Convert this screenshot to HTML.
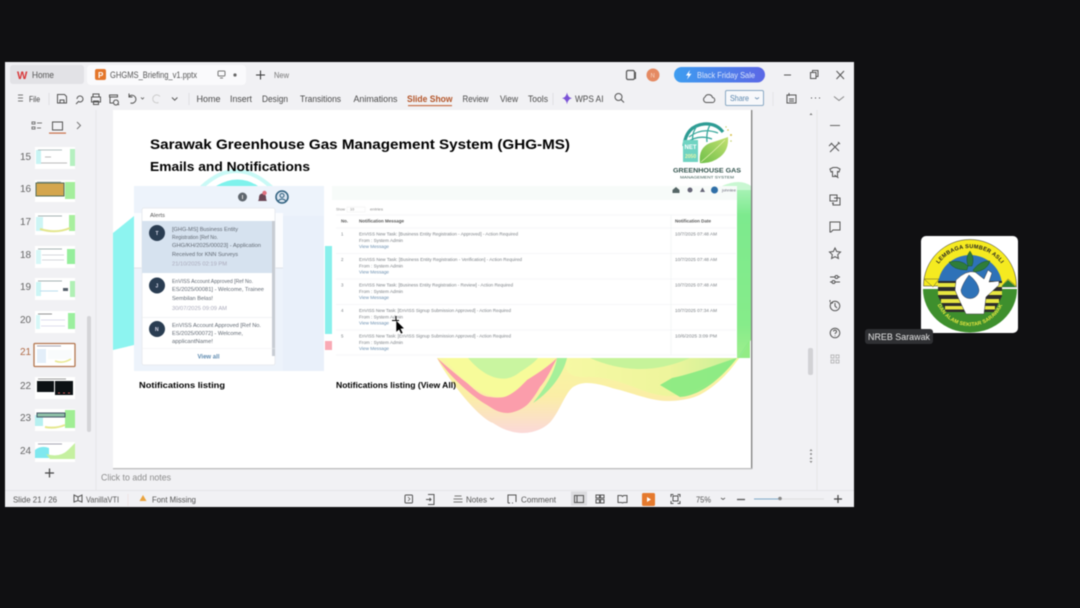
<!DOCTYPE html>
<html><head><meta charset="utf-8"><title>GHGMS Briefing</title>
<style>
html,body{margin:0;padding:0;background:#101012;width:1080px;height:608px;overflow:hidden}
svg{display:block;position:absolute;left:0;top:0;filter:blur(.42px)}
text{font-family:"Liberation Sans",sans-serif;fill:#555}
.r{font-size:9px;fill:#4a4a4a}
.s{font-size:8.5px;fill:#555}
.n{font-size:10px;fill:#666}
.b{font-weight:bold;fill:#000}
.a{font-size:5.4px;fill:#626a74}
.d{font-size:5.2px;fill:#aab}
.m{font-size:4.4px;fill:#7a7f84}
.l{font-size:4.4px;fill:#6b8fb0}
.i{fill:none;stroke:#555;stroke-width:1}
</style></head><body>
<svg width="1080" height="608" viewBox="0 0 1080 608" xmlns="http://www.w3.org/2000/svg">
<defs>
<linearGradient id="grnr" x1="0" y1="0" x2="1" y2="0"><stop offset="0" stop-color="#f6f9a4"/><stop offset=".6" stop-color="#eef59c"/><stop offset="1" stop-color="#c8f098"/></linearGradient>
<linearGradient id="edge" x1="0" y1="0" x2="0" y2="1"><stop offset="0" stop-color="#f6fb9e"/><stop offset=".6" stop-color="#fbeea6"/><stop offset="1" stop-color="#fbd9d9"/></linearGradient>
<linearGradient id="blu" x1="0" y1="0" x2="1" y2="0"><stop offset="0" stop-color="#3e9df0"/><stop offset="1" stop-color="#5b67e6"/></linearGradient>
<linearGradient id="lf" x1="0" y1="1" x2="1" y2="0"><stop offset="0" stop-color="#6fc04a"/><stop offset="1" stop-color="#c3e070"/></linearGradient>
<linearGradient id="gbar" x1="0" y1="0" x2="0" y2="1"><stop offset="0" stop-color="#a6f2b4"/><stop offset=".15" stop-color="#7dea8e"/><stop offset=".8" stop-color="#86ec8a"/><stop offset="1" stop-color="#9fef8e"/></linearGradient>
<path id="arcT" d="M931 287 A39 39 0 0 1 1009 287"/>
<path id="arcB" d="M935 292 A35 34 0 0 0 1005 292"/>
</defs>

<!-- window -->
<rect x="5" y="62" width="849" height="445" fill="#f1f1f4"/>
<!-- tabs -->
<rect x="10" y="65" width="74" height="19" rx="3" fill="#e2e2e6"/>
<rect x="87" y="65" width="159" height="20" rx="4" fill="#fafafc"/>
<text x="17" y="79" font-size="11" font-weight="bold" style="fill:#d9383a">W</text>
<text x="32" y="78" class="r" style="fill:#555" textLength="22" lengthAdjust="spacingAndGlyphs">Home</text>
<rect x="95" y="69" width="11" height="11" rx="2" fill="#e4762b"/>
<text x="98" y="78" font-size="8" font-weight="bold" style="fill:#fff">P</text>
<text x="110" y="78" class="r" style="fill:#555" textLength="87" lengthAdjust="spacingAndGlyphs">GHGMS_Briefing_v1.pptx</text>
<rect x="218" y="71" width="7" height="5" rx="1" class="i" style="stroke:#777"/><path d="M220 78h3" class="i" style="stroke:#777"/>
<circle cx="235" cy="75" r="1.6" fill="#666"/>
<path d="M256 75h9M260.500 70.500v9" class="i" style="stroke:#333"/>
<text x="274" y="78" font-size="8" style="fill:#777" textLength="15" lengthAdjust="spacingAndGlyphs">New</text>
<!-- top right -->
<rect x="626.500" y="70.500" width="8" height="9" rx="1.500" class="i" style="stroke-width:1.200"/><path d="M635.500 72v7" class="i"/>
<circle cx="653" cy="75" r="6.500" fill="#e58a62"/><text x="650.500" y="77.500" font-size="6" style="fill:#f9d5c4">N</text>
<rect x="674" y="67" width="91" height="15.500" rx="7.700" fill="url(#blu)"/>
<path d="M690 70l-4 5.500h2.500l-1.500 4 4.500-5.700h-2.700z" fill="#fff"/>
<text x="697" y="78" font-size="8.500" style="fill:#dce6fb" textLength="58" lengthAdjust="spacingAndGlyphs">Black Friday Sale</text>
<path d="M784 75h7" class="i"/>
<path d="M810.500 72.500h5.500v6h-5.500zM812.500 72.500v-2h5.500v6h-2" class="i"/>
<path d="M836.500 71l7.500 8M844 71l-7.500 8" class="i"/>
<!-- ribbon -->
<path d="M18 95h5M18 98h5M18 101h5" class="i" style="stroke:#777"/>
<text x="29" y="102" font-size="8.500" style="fill:#444" textLength="11" lengthAdjust="spacingAndGlyphs">File</text>
<path d="M49 93v12" stroke="#e0e0e3"/>
<path d="M57.500 94.500h7l2 2v6.500h-9zM60 103v-3h4v3" class="i"/>
<path d="M77 99a3 3 0 1 1 3 3h-1M76 104l3-3" class="i"/>
<path d="M93 97v-3h6v3M91.500 97h9v5h-9zM93.500 101h5v3.500h-5z" class="i"/>
<path d="M109.500 95h8v2h-8zM110 97v6h3M116 100a2.500 2.500 0 1 1-.1 0M117.500 103.500l1.500 1.500" class="i"/>
<path d="M129 96.500a4 4 0 1 1 1.500 6.500M129 93.500v3.500h3.500" class="i"/>
<path d="M141 97.500l1.500 1.500 1.500-1.500" class="i" style="stroke-width:.8"/>
<path d="M160 96.500a4 4 0 1 0-1.500 6" class="i" style="stroke:#ccc"/>
<path d="M172 97.500l2.700 2.700 2.700-2.700" class="i"/>
<path d="M189 93v12" stroke="#e0e0e3"/>
<text x="196.500" y="102" class="r" textLength="24" lengthAdjust="spacingAndGlyphs">Home</text>
<text x="230" y="102" class="r" textLength="22" lengthAdjust="spacingAndGlyphs">Insert</text>
<text x="262" y="102" class="r" textLength="26" lengthAdjust="spacingAndGlyphs">Design</text>
<text x="300" y="102" class="r" textLength="41" lengthAdjust="spacingAndGlyphs">Transitions</text>
<text x="353.500" y="102" class="r" textLength="44" lengthAdjust="spacingAndGlyphs">Animations</text>
<text x="407" y="102" class="r" font-weight="bold" style="fill:#b4562a" textLength="45.500" lengthAdjust="spacingAndGlyphs">Slide Show</text>
<rect x="408" y="105" width="44" height="1.200" fill="#c9714a"/>
<text x="462.500" y="102" class="r" textLength="26" lengthAdjust="spacingAndGlyphs">Review</text>
<text x="500" y="102" class="r" textLength="18" lengthAdjust="spacingAndGlyphs">View</text>
<text x="528" y="102" class="r" textLength="20" lengthAdjust="spacingAndGlyphs">Tools</text>
<path d="M553 93v12" stroke="#e0e0e3"/>
<path d="M567 92.500q.8 5 5 5.800q-4.200.8-5 6q-.8-5.200-5-6q4.200-.8 5-5.800z" fill="#7a52d6"/>
<text x="575" y="102" class="r" textLength="28.500" lengthAdjust="spacingAndGlyphs">WPS AI</text>
<circle cx="618.500" cy="97" r="3.500" class="i"/><path d="M621 99.500l3 3" class="i"/>
<path d="M706 102.500h6a2.500 2.500 0 0 0 .5-5a4 4 0 0 0-7.500-.5a3 3 0 0 0 1 5.500z" class="i"/>
<rect x="725.500" y="90.500" width="38" height="15" rx="1.500" fill="#f7f8fb" stroke="#8aa9c4"/>
<text x="730" y="101" font-size="8.500" style="fill:#5a86ad" textLength="19" lengthAdjust="spacingAndGlyphs">Share</text>
<path d="M755 97.500l2 1.500 2-1.500" class="i" style="stroke:#6b8eb0;stroke-width:.8"/>
<path d="M773 92v14" stroke="#e4e4e7"/>
<path d="M787 95h9v8h-9zM789 93v3M789 99h5M789 101h5" class="i"/>
<path d="M811 98h1M815 98h1M819 98h1" class="i" style="stroke:#444"/>
<path d="M834 96.500l5 4 5-4" class="i" style="stroke:#888"/>

<!-- left panel -->
<path d="M96 110V490" stroke="#e6e6e9"/>
<path d="M32 122h3v2h-3zM32 127h3v2h-3zM37 123h5M37 128h4" class="i" style="stroke:#777"/>
<rect x="52.500" y="122" width="10" height="8" class="i"/>
<rect x="49" y="132.500" width="17" height="1.200" fill="#c9714a"/>
<path d="M77 122l3.500 3.500-3.500 3.500" class="i" style="stroke:#777"/>
<text x="20" y="160" class="n">15</text><text x="20" y="192" class="n">16</text><text x="20" y="225" class="n">17</text><text x="20" y="258" class="n">18</text><text x="20" y="290" class="n">19</text><text x="20" y="323" class="n">20</text>
<text x="20" y="355" class="n" style="fill:#b06a45">21</text><text x="20" y="389" class="n">22</text><text x="20" y="421" class="n">23</text><text x="20" y="454" class="n">24</text>
<!-- thumbs -->
<g>
<rect x="35" y="147" width="40" height="22" fill="#fff"/><rect x="36" y="150" width="5" height="14" fill="#c8f4f4"/><rect x="70" y="149" width="5" height="17" fill="#b5f0c0"/><path d="M38 150h24" stroke="#9aa" stroke-width=".8"/><path d="M41 163h26M45 157h6" stroke="#bbb"/>
<rect x="35" y="180" width="40" height="22" fill="#fff"/><rect x="36" y="183" width="28" height="13" fill="#d4a64e" stroke="#556b55"/><rect x="65" y="182" width="10" height="17" fill="#a4ee9c"/><path d="M37 182h24" stroke="#899" stroke-width=".8"/>
<rect x="35" y="213" width="40" height="22" fill="#fff"/><rect x="36" y="217" width="7" height="14" fill="#cdf5f5"/><rect x="69" y="215" width="6" height="16" fill="#a8ef9e"/><path d="M40 229q16 5 30-1" stroke="#e3e68c" stroke-width="2" fill="none"/><path d="M38 216h24" stroke="#899" stroke-width=".8"/>
<rect x="35" y="246" width="40" height="22" fill="#fff"/><rect x="36" y="250" width="5" height="14" fill="#d7f7f7"/><rect x="67" y="249" width="8" height="15" fill="#95ee9c"/><path d="M38 249h24" stroke="#899" stroke-width=".8"/><path d="M42 255h22M42 260h22" stroke="#d5d8dc"/>
<rect x="35" y="278" width="40" height="22" fill="#fff"/><rect x="36" y="282" width="5" height="14" fill="#ccf5f5"/><rect x="70" y="281" width="5" height="16" fill="#b0f0b5"/><rect x="63" y="288" width="5" height="3" fill="#56606a"/><path d="M38 281h24" stroke="#899" stroke-width=".8"/><path d="M40 291h18" stroke="#bde"/>
<rect x="35" y="311" width="40" height="22" fill="#fff"/><rect x="36" y="315" width="4" height="14" fill="#d7f7f7"/><rect x="68" y="313" width="7" height="16" fill="#9bef9e"/><path d="M38 314h14" stroke="#777" stroke-width=".8"/><path d="M41 320h24M41 326h24" stroke="#dde"/>
<rect x="34" y="343.500" width="41" height="23" rx="1" fill="#fff" stroke="#b3764e" stroke-width="1.300"/><rect x="37" y="349" width="9" height="14" fill="#e3eef9"/><rect x="48" y="350" width="24" height="9" fill="#f9fbfc"/><path d="M37 346h24" stroke="#889" stroke-width=".8"/><path d="M55 361q8 3 16-2" stroke="#e8e88e" stroke-width="1.500" fill="none"/>
<rect x="35" y="377" width="40" height="22" fill="#fff"/><rect x="37" y="381" width="17" height="11" fill="#0c1114"/><rect x="55" y="381" width="18" height="14" fill="#0c1114"/><path d="M38 379h28" stroke="#777" stroke-width=".8"/><path d="M58 393h2M63 393h2M68 393h2" stroke="#c55"/>
<rect x="35" y="409" width="40" height="22" fill="#fff"/><rect x="35" y="415" width="8" height="11" fill="#b5f0f0"/><rect x="65" y="410" width="10" height="18" fill="#a0ee94"/><rect x="37" y="413" width="28" height="4" fill="#8fc0a8" stroke="#456"/><path d="M45 427q10 2 20-2" stroke="#e5e88e" stroke-width="2" fill="none"/>
<rect x="35" y="442" width="40" height="20" fill="#fff"/><path d="M35 450q6-5 14-2v10h-14z" fill="#7fe8ef"/><path d="M46 454q14 4 22-4l7-7v16h-25z" fill="#c5f0a0"/><path d="M38 444h24" stroke="#889" stroke-width=".8"/>
</g>
<rect x="87" y="316" width="4" height="116" rx="2" fill="#d4d4d7"/>
<path d="M45 473h9M49.500 468.500v9" stroke="#444" stroke-width="1.200"/>

<!-- slide -->
<rect x="750.500" y="110" width="1.800" height="359" fill="#7f7f7f"/>
<rect x="113" y="468" width="639" height="1.300" fill="#bdbdbd"/>
<rect x="113" y="110" width="638" height="358" fill="#fff"/>
<!-- decorations -->
<path d="M200 186Q236 152 273 186Z" fill="#c9f9f6"/>
<path d="M206 186Q236 160 267 186Z" fill="#ffffff"/>
<path d="M216 186Q238 173 258 186Z" fill="#7ff2ec"/>
<path d="M113 233L134 216V345L113 350Z" fill="#8df4f0"/>
<rect x="325" y="246" width="7" height="88" fill="#88f0ec"/>
<rect x="325" y="341" width="7" height="9" fill="#f9a9b4"/>
<path d="M722 186Q740 178 751 186V200H722Z" fill="#c9f7d2"/>
<path d="M737 190H751V340L737 358Z" fill="url(#gbar)"/>
<!-- wave -->
<path d="M437 358C447 378 478 418 493 423C505 431 515 433 523 433C535 433 547 427 552 420C560 410 566 392 573 387C578 384 582 383 587 383C600 383 610 388 620 390C640 396 655 401 667 401C682 401 695 398 703 393C715 386 725 376 730 370C738 360 746 350 750 340V358Z" fill="url(#edge)"/>
<path d="M567 358C562 372 572 378 587 377C620 376 640 394 667 396C690 396 720 380 737 358Z" fill="url(#grnr)"/>
<path d="M680 397C700 396 722 378 737 358L750 340V358L737 358C722 362 700 372 672 378L660 385Z" fill="#86ea82" opacity=".9"/>
<path d="M590 358Q640 380 690 358Z" fill="#c6f39a"/>
<path d="M557 358H567C563 375 550 392 533 403C545 388 555 372 557 358Z" fill="#a5f09a"/>
<path d="M444 358C460 378 480 397 500 397C520 397 545 378 552 358Z" fill="#f7fb9a"/>
<path d="M468 358C485 378 505 385 520 372C528 367 535 362 538 358Z" fill="#c9f5a0"/>
<path d="M437 358C445 365 458 376 467 383C475 390 482 397 490 397C497 398 503 398 507 396C516 392 522 385 527 380C540 372 550 365 557 358C550 372 546 380 540 387C535 396 530 402 527 405C521 410 513 413 507 413C498 413 492 408 487 405C480 401 475 397 470 393C458 383 447 372 437 358Z" fill="#fb9dab"/>
<!-- titles -->
<text x="150" y="149" class="b" font-size="14" textLength="420" lengthAdjust="spacingAndGlyphs">Sarawak Greenhouse Gas Management System (GHG-MS)</text>
<text x="150" y="171" class="b" font-size="13" textLength="160" lengthAdjust="spacingAndGlyphs">Emails and Notifications</text>
<!-- GHG logo -->
<g>
<path d="M684 146Q686 126 704 124Q716 123 723 132" fill="none" stroke="#2e9c94" stroke-width="3.200"/>
<path d="M689 137Q702 127 718 133M697 126Q690 135 694 146M710 125Q706 132 707 142M686 143Q698 134 712 139" fill="none" stroke="#38a89c" stroke-width="1.300"/>
<rect x="683" y="140" width="15" height="22" fill="#6fd3c2"/>
<text x="684.500" y="149" font-size="6" font-weight="bold" style="fill:#fff">NET</text>
<text x="685" y="158" font-size="5" font-weight="bold" style="fill:#e9f5a9">2050</text>
<path d="M700 163Q698 148 710 143Q720 140 728 137Q729 150 720 157Q711 164 700 163Z" fill="url(#lf)"/>
<path d="M701 162Q712 153 725 140" stroke="#e8f3b5" fill="none" stroke-width=".7"/>
<circle cx="728" cy="130" r=".8" fill="#d8c04a"/><circle cx="731" cy="135" r="1" fill="#d8c04a"/><circle cx="731" cy="141" r=".8" fill="#c3d06a"/><circle cx="726" cy="127" r=".7" fill="#c3d06a"/>
<text x="673" y="172.500" font-size="6.600" font-weight="bold" style="fill:#31524c" textLength="68" lengthAdjust="spacingAndGlyphs">GREENHOUSE GAS</text>
<text x="680" y="178.500" font-size="3.800" style="fill:#31524c" textLength="54" lengthAdjust="spacingAndGlyphs">MANAGEMENT SYSTEM</text>
</g>

<!-- Left card -->
<rect x="134" y="186" width="190" height="185" fill="#edf3fb"/>
<rect x="283" y="216" width="41" height="155" fill="#e9f0fa"/>
<rect x="134" y="213" width="149" height="55" fill="#fbfcfe"/>
<path d="M134 268h149" stroke="#dfe4ea"/>
<circle cx="242.500" cy="197" r="4.500" fill="#5f666e"/><rect x="242" y="195" width="1" height="4" fill="#ddd"/>
<path d="M258 201q1-1 1-4a3.500 3.500 0 0 1 7 0q0 3 1 4z" fill="#6b4755"/><circle cx="264.500" cy="193" r="2.200" fill="#e0707f"/>
<circle cx="282" cy="197" r="6" fill="#dbe5f0" stroke="#2f607f" stroke-width="1.500"/>
<circle cx="282" cy="195.500" r="2" fill="none" stroke="#2f607f"/><path d="M278 201q4-4 8 0" fill="none" stroke="#2f607f"/>
<rect x="142" y="208" width="133" height="157" rx="2" fill="#fff" stroke="#e8ebef"/>
<text x="150" y="217" font-size="5.600" style="fill:#555" textLength="15" lengthAdjust="spacingAndGlyphs">Alerts</text>
<rect x="142" y="221" width="130" height="52" fill="#d6e2ef"/>
<rect x="272" y="221" width="3" height="135" fill="#c7ccd3"/>
<path d="M142 317.500h130" stroke="#e6e8eb" stroke-width=".6"/>
<circle cx="157" cy="233" r="8" fill="#2a3d52"/><text x="155.500" y="235" font-size="5" font-weight="bold" style="fill:#dde">T</text>
<circle cx="157" cy="285.500" r="8" fill="#2a3d52"/><text x="155.500" y="287.500" font-size="5" font-weight="bold" style="fill:#dde">J</text>
<circle cx="157" cy="329" r="8" fill="#2a3d52"/><text x="155" y="331" font-size="5" font-weight="bold" style="fill:#dde">N</text>
<text x="172" y="231" class="a" textLength="66" lengthAdjust="spacingAndGlyphs">[GHG-MS] Business Entity</text>
<text x="172" y="239" class="a" textLength="46" lengthAdjust="spacingAndGlyphs">Registration [Ref No.</text>
<text x="172" y="247" class="a" textLength="89" lengthAdjust="spacingAndGlyphs">GHG/KH/2025/00023] - Application</text>
<text x="172" y="256" class="a" textLength="66" lengthAdjust="spacingAndGlyphs">Received for KNN Surveys</text>
<text x="172" y="265.500" class="d" textLength="55" lengthAdjust="spacingAndGlyphs">21/10/2025 02:19 PM</text>
<text x="172" y="283" class="a" textLength="81" lengthAdjust="spacingAndGlyphs">EnVISS Account Approved [Ref No.</text>
<text x="172" y="291" class="a" textLength="92" lengthAdjust="spacingAndGlyphs">ES/2025/00081] - Welcome, Trainee</text>
<text x="172" y="300" class="a" textLength="41" lengthAdjust="spacingAndGlyphs">Sembilan Belas!</text>
<text x="172" y="310" class="d" textLength="55" lengthAdjust="spacingAndGlyphs">30/07/2025 09:09 AM</text>
<text x="172" y="327" class="a" textLength="89" lengthAdjust="spacingAndGlyphs">EnVISS Account Approved [Ref No.</text>
<text x="172" y="335" class="a" textLength="71" lengthAdjust="spacingAndGlyphs">ES/2025/00072] - Welcome,</text>
<text x="172" y="343" class="a" textLength="41" lengthAdjust="spacingAndGlyphs">applicantName!</text>
<path d="M142 348.500h133" stroke="#edeff2" stroke-width=".6"/>
<text x="197.500" y="358.500" font-size="6" font-weight="bold" style="fill:#5f8bb0" textLength="22" lengthAdjust="spacingAndGlyphs">View all</text>
<text x="139" y="388" class="b" font-size="8" textLength="86" lengthAdjust="spacingAndGlyphs">Notifications listing</text>

<!-- right table -->
<rect x="332" y="186" width="405" height="171" fill="#fff"/>
<rect x="332" y="186" width="405" height="14" fill="#f7fbf9"/>
<path d="M672.500 190l3.500-3 3.500 3v3h-7z" fill="#566"/><circle cx="690" cy="190" r="2.500" fill="#667"/><path d="M700 192l2.500-4.500 2.500 4.500z" fill="#667"/><circle cx="714.500" cy="190" r="3.500" fill="#2f6fa7"/>
<text x="722" y="191.500" font-size="4" style="fill:#667" textLength="14" lengthAdjust="spacingAndGlyphs">johnlee</text>
<text x="336" y="210.500" font-size="3.800" style="fill:#888" textLength="9" lengthAdjust="spacingAndGlyphs">Show</text>
<rect x="347" y="207" width="18" height="5" fill="#fff" stroke="#eee" stroke-width=".5"/><text x="350" y="210.500" font-size="3.800" style="fill:#888">10</text>
<text x="370" y="210.500" font-size="3.800" style="fill:#888" textLength="13" lengthAdjust="spacingAndGlyphs">entries</text>
<path d="M336 215h400M336 228h400M336 253.500h400M336 279h400M336 304.500h400M336 330h400M336 355h400M671 215v140" stroke="#eef0f2" stroke-width=".6"/>
<g font-weight="bold">
<text x="341" y="222.500" class="m" style="fill:#555" textLength="7" lengthAdjust="spacingAndGlyphs">No.</text>
<text x="359" y="222.500" class="m" style="fill:#555" textLength="45" lengthAdjust="spacingAndGlyphs">Notification Message</text>
<text x="675" y="222.500" class="m" style="fill:#555" textLength="36" lengthAdjust="spacingAndGlyphs">Notification Date</text>
</g>
<g>
<text x="341" y="235.500" class="m">1</text><text x="359" y="235.500" class="m" textLength="159" lengthAdjust="spacingAndGlyphs">EnVISS New Task: [Business Entity Registration - Approved] - Action Required</text><text x="359" y="242" class="m" textLength="44" lengthAdjust="spacingAndGlyphs">From : System Admin</text><text x="359" y="248" class="l" textLength="30" lengthAdjust="spacingAndGlyphs">View Message</text><text x="675" y="235.500" class="m" textLength="42" lengthAdjust="spacingAndGlyphs">10/7/2025 07:48 AM</text>
<text x="341" y="261" class="m">2</text><text x="359" y="261" class="m" textLength="163" lengthAdjust="spacingAndGlyphs">EnVISS New Task: [Business Entity Registration - Verification] - Action Required</text><text x="359" y="267.500" class="m" textLength="44" lengthAdjust="spacingAndGlyphs">From : System Admin</text><text x="359" y="273.500" class="l" textLength="30" lengthAdjust="spacingAndGlyphs">View Message</text><text x="675" y="261" class="m" textLength="42" lengthAdjust="spacingAndGlyphs">10/7/2025 07:48 AM</text>
<text x="341" y="286.500" class="m">3</text><text x="359" y="286.500" class="m" textLength="154" lengthAdjust="spacingAndGlyphs">EnVISS New Task: [Business Entity Registration - Review] - Action Required</text><text x="359" y="293" class="m" textLength="44" lengthAdjust="spacingAndGlyphs">From : System Admin</text><text x="359" y="299" class="l" textLength="30" lengthAdjust="spacingAndGlyphs">View Message</text><text x="675" y="286.500" class="m" textLength="42" lengthAdjust="spacingAndGlyphs">10/7/2025 07:48 AM</text>
<text x="341" y="312" class="m">4</text><text x="359" y="312" class="m" textLength="152" lengthAdjust="spacingAndGlyphs">EnVISS New Task: [EnVISS Signup Submission Approved] - Action Required</text><text x="359" y="318.500" class="m" textLength="44" lengthAdjust="spacingAndGlyphs">From : System Admin</text><text x="359" y="324.500" class="l" textLength="30" lengthAdjust="spacingAndGlyphs">View Message</text><text x="675" y="312" class="m" textLength="42" lengthAdjust="spacingAndGlyphs">10/7/2025 07:34 AM</text>
<text x="341" y="337.500" class="m">5</text><text x="359" y="337.500" class="m" textLength="152" lengthAdjust="spacingAndGlyphs">EnVISS New Task: [EnVISS Signup Submission Approved] - Action Required</text><text x="359" y="344" class="m" textLength="44" lengthAdjust="spacingAndGlyphs">From : System Admin</text><text x="359" y="350" class="l" textLength="30" lengthAdjust="spacingAndGlyphs">View Message</text><text x="675" y="337.500" class="m" textLength="42" lengthAdjust="spacingAndGlyphs">10/6/2025 3:09 PM</text>
</g>
<text x="336" y="388" class="b" font-size="8" textLength="120" lengthAdjust="spacingAndGlyphs">Notifications listing (View All)</text>
<!-- cursor -->
<path d="M396 320l0 12.500 3-2.500 2 4 2-1-2-4 3.500-.5z" fill="#000" stroke="#fff" stroke-width=".6"/>
<path d="M392 320.500h7M396 316v4" stroke="#000" stroke-width="1"/>

<!-- right side -->
<path d="M817 110V490" stroke="#e5e5e8"/>
<path d="M811 113l-1.500 2h3z" fill="#777"/>
<rect x="808" y="348" width="5" height="27" rx="2" fill="#d2d2d5"/>
<path d="M811 449l-1.500 2h3zM811 457l-1.500 2h3z" fill="#888"/><circle cx="811" cy="454" r="1" fill="#888"/><path d="M809.500 461h3l-1.500 2z" fill="#888"/>
<path d="M830 125.500h10" stroke="#666"/>
<path d="M830 152l9-9M831 143l8 8M838 142l2 2M829 146l3-3" class="i"/>
<path d="M830 169l3-1.500h4l3 1.500-1 3-1.500-.5v5h-5v-5l-1.500.5zM834.500 175l4 3" class="i"/>
<path d="M830 195h7v6h-7zM834 198h6v7h-7v-2M832 203h2" class="i"/>
<path d="M830 222h10v8h-7l-2 2h-1z" class="i"/>
<path d="M835 248l1.700 3.500 3.800.5-2.800 2.700.7 3.800-3.400-1.800-3.400 1.800.7-3.800-2.800-2.700 3.800-.5z" class="i"/>
<path d="M830 277h5M838 277h2M830 282h2M835 282h5" class="i"/><circle cx="836.500" cy="277" r="1.500" class="i"/><circle cx="833.500" cy="282" r="1.500" class="i"/>
<circle cx="835" cy="306" r="4.800" class="i"/><path d="M835 303v3l2 2M830 302v-2M830 303h3" class="i"/>
<circle cx="835" cy="333" r="4.800" class="i"/><path d="M833.500 331.500a1.500 1.500 0 1 1 2 1.500l-.5 1M835 335.500v.5" class="i"/>
<g style="opacity:.35"><rect x="831" y="355" width="3" height="3" class="i"/><rect x="836" y="355" width="3" height="3" class="i"/><rect x="831" y="360" width="3" height="3" class="i"/><rect x="836" y="360" width="3" height="3" class="i"/></g>

<!-- notes -->
<text x="101" y="480.500" font-size="9" style="fill:#8d8d8d" textLength="70" lengthAdjust="spacingAndGlyphs">Click to add notes</text>
<path d="M96 490.500H854" stroke="#e5e5e8"/>
<path d="M5 490.500H96" stroke="#e5e5e8"/>
<!-- status -->
<text x="13" y="502.500" class="s" textLength="44" lengthAdjust="spacingAndGlyphs">Slide 21 / 26</text>
<path d="M74 495l4 2 4-2v7l-4-1.500-4 1.500zM78 497v3" class="i"/>
<text x="86" y="502.500" class="s" textLength="33" lengthAdjust="spacingAndGlyphs">VanillaVTI</text>
<path d="M128 494v12" stroke="#f0e4e4"/>
<path d="M143 495l3.500 6h-7z" fill="#e9a33e"/>
<text x="152" y="502.500" class="s" textLength="44" lengthAdjust="spacingAndGlyphs">Font Missing</text>
<rect x="405" y="495" width="7.500" height="8" rx="1" class="i"/><path d="M408 497l2 2-2 2" class="i" style="stroke-width:.7"/>
<path d="M428 494.500h6v10h-6M426 499.500h5M429.500 498l1.500 1.500-1.500 1.500" class="i"/>
<path d="M454.500 496h7M453.500 499h9M453.500 502h9" class="i" style="stroke:#777"/>
<text x="466" y="502.500" class="s" textLength="21" lengthAdjust="spacingAndGlyphs">Notes</text>
<path d="M490 498l2 1.500 2-1.500" class="i" style="stroke-width:.8"/>
<path d="M508 503v-8h8v7M508 503h2M512 503h1" class="i"/>
<text x="521" y="502.500" class="s" textLength="35" lengthAdjust="spacingAndGlyphs">Comment</text>
<rect x="571" y="491.500" width="16" height="14" fill="#dcdcdf"/>
<rect x="574.500" y="495.500" width="9" height="7" class="i"/><path d="M577 495.500v7" class="i"/>
<path d="M596 495h3.500v3h-3.500zM600.500 495h3.500v3h-3.500zM596 499.500h3.500v3.500h-3.500zM600.500 499.500h3.500v3.500h-3.500z" class="i"/>
<path d="M618 495.500h3.500l1 1 1-1h3.500v7h-3.500l-1 .5-1-.5h-3.500z" class="i"/>
<rect x="642" y="493" width="13" height="13" rx="1.500" fill="#e57a2e"/><path d="M647 497l4 2.500-4 2.500z" fill="#fff"/>
<rect x="673" y="496" width="5" height="5" class="i"/><path d="M671 497v-2.500h2.500M680 497v-2.500h-2.500M671 501v2.500h2.500M680 501v2.500h-2.500" class="i"/>
<text x="696" y="502.500" class="s" textLength="15" lengthAdjust="spacingAndGlyphs">75%</text>
<path d="M721 498l2 1.500 2-1.500" class="i" style="stroke-width:.8"/>
<path d="M737 499.500h8" stroke="#555" stroke-width="1.300"/>
<path d="M754 499h26" stroke="#7fa8c9" stroke-width="1"/><path d="M780 499h44" stroke="#dcdcdf" stroke-width="1"/>
<circle cx="780" cy="498.500" r="1.800" fill="#888"/>
<path d="M834 499h8M838 495v8" stroke="#444" stroke-width="1.200"/>

<!-- NREB logo -->
<rect x="921" y="236" width="97" height="97" rx="5" fill="#fff"/>
<path d="M923.500 282A46.500 46.500 0 0 1 1016.500 282Z" fill="#f5ea20" stroke="#333" stroke-width=".5" transform="translate(0 4)"/>
<path d="M938 286A32 31 0 0 1 1002 286Z" fill="#2e72b8"/>
<path d="M924 279h15l-6 8zM1001 287l7-8 9 8z" fill="#f5ea20" stroke="#333" stroke-width=".4"/>
<path d="M1001 287l7-7 8 7z" fill="#2e7d2e"/>
<path d="M923 289A47 43.500 0 0 0 1017 289Z" fill="#3e8f2d"/>
<path d="M938 281H1002V296L994 312H946L938 296Z" fill="#2c2c2c"/>
<rect x="938" y="283" width="64" height="4" fill="#e7e640"/>
<rect x="938" y="291" width="64" height="4" fill="#e7e640"/>
<rect x="941" y="299" width="58" height="4" fill="#e7e640"/>
<rect x="945" y="306" width="50" height="3.500" fill="#e7e640"/>
<path d="M956 280Q966 270 975 272L984 279L988 270L992 273L989 282L999 281L999 285L986 297L984 314L966 314Q958 298 955 290Z" fill="#fff" stroke="#333" stroke-width=".5"/>
<path d="M969 275Q978 282 979 290A9 8.500 0 1 1 961 290Q963 283 969 275Z" fill="#2e72b8" stroke="#223" stroke-width=".4"/>
<path d="M967 270Q953 270 949 262Q961 259 968 266ZM968 266Q965 257 970 251Q975 258 972 266ZM973 270Q981 260 990 261Q987 271 974 272Z" fill="#2e7d3a" stroke="#1a4a20" stroke-width=".4"/>
<text font-size="5.600" font-weight="bold" text-anchor="middle" style="fill:#222;letter-spacing:.25px"><textPath href="#arcT" startOffset="50%">LEMBAGA SUMBER ASLI</textPath></text>
<text font-size="5.200" font-weight="bold" text-anchor="middle" style="fill:#e7e640;letter-spacing:.1px"><textPath href="#arcB" startOffset="50%">DAN ALAM SEKITAR SARAWAK</textPath></text>
<!-- name tag -->
<rect x="865" y="329" width="68" height="15" rx="3" fill="#2f3033"/>
<text x="868" y="340" font-size="9.500" style="fill:#e6e6e6" textLength="62" lengthAdjust="spacingAndGlyphs">NREB Sarawak</text>
</svg>
</body></html>
